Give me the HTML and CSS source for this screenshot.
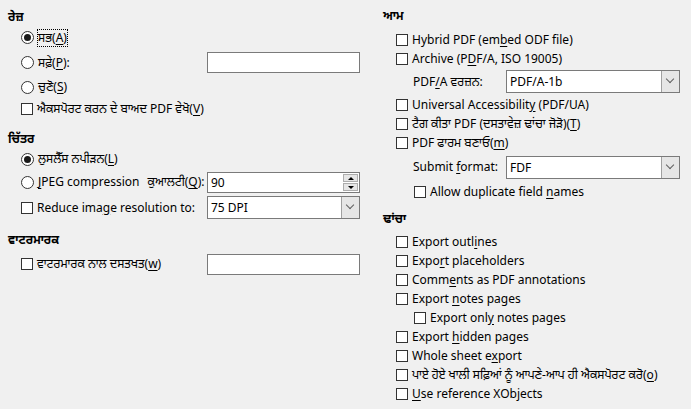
FILE: index.html
```html
<!DOCTYPE html>
<html lang="pa">
<head>
<meta charset="utf-8">
<link rel="stylesheet" href="styles.css">
</head>
<body>
<div class="dialog">
  <div class="col col-left">
    <div class="heading">ਰੇਜ਼</div>
    <div class="row r-all"><span class="radio checked"></span><span class="label focus">ਸਭ(<u>A</u>)</span></div>
    <div class="row r-pages"><span class="radio"></span><span class="label">ਸਫ਼ੇ(<u>P</u>):</span><span class="field field-left"></span></div>
    <div class="row r-sel"><span class="radio"></span><span class="label">ਚੁਣੋ(<u>S</u>)</span></div>
    <div class="row r-view"><span class="check"></span><span class="label">ਐਕਸਪੋਰਟ ਕਰਨ ਦੇ ਬਾਅਦ PDF ਵੇਖੋ(<u>V</u>)</span></div>

    <div class="heading h-images">ਚਿੱਤਰ</div>
    <div class="row r-lossless"><span class="radio checked"></span><span class="label">ਲੁਸਲੈੱਸ ਨਪੀੜਨ(<u>L</u>)</span></div>
    <div class="row r-jpeg"><span class="radio"></span><span class="label"><u>J</u>PEG compression</span><span class="label q">ਕੁਆਲਟੀ(<u>Q</u>):</span>
      <span class="field field-left spin"><span class="val">90</span><span class="spin-btns"><span class="sb up"></span><span class="sb down"></span></span></span>
    </div>
    <div class="row r-reduce"><span class="check"></span><span class="label">Reduce ima<u>g</u>e resolution to:</span>
      <span class="field field-left combo"><span class="val">75 DPI</span><span class="drop"></span></span>
    </div>

    <div class="heading h-water">ਵਾਟਰਮਾਰਕ</div>
    <div class="row r-water"><span class="check"></span><span class="label">ਵਾਟਰਮਾਰਕ ਨਾਲ ਦਸਤਖਤ(<u>w</u>)</span><span class="field field-left"></span></div>
  </div>

  <div class="col col-right">
    <div class="heading">ਆਮ</div>
    <div class="row r19 first"><span class="check"></span><span class="label">Hybrid PDF (em<u>b</u>ed ODF file)</span></div>
    <div class="row r19"><span class="check"></span><span class="label">Archive (P<u>D</u>F/A, ISO 19005)</span></div>
    <div class="row r-pdfa"><span class="label sub">PDF<u>/</u>A ਵਰਜ਼ਨ:</span>
      <span class="field field-right combo"><span class="val">PDF/A-1b</span><span class="drop"></span></span>
    </div>
    <div class="row r19"><span class="check"></span><span class="label">Universal Accessibilit<u>y</u> (PDF/UA)</span></div>
    <div class="row r19"><span class="check"></span><span class="label">ਟੈਗ ਕੀਤਾ PDF (ਦਸਤਾਵੇਜ਼ ਢਾਂਚਾ ਜੋੜੋ)(<u>T</u>)</span></div>
    <div class="row r19"><span class="check"></span><span class="label">PDF ਫਾਰਮ ਬਣਾਓ(<u>m</u>)</span></div>
    <div class="row r-submit"><span class="label sub">Submit <u>f</u>ormat:</span>
      <span class="field field-right combo"><span class="val">FDF</span><span class="drop"></span></span>
    </div>
    <div class="row r19 indent"><span class="check"></span><span class="label">Allow duplicate field <u>n</u>ames</span></div>

    <div class="heading h-struct">ਢਾਂਚਾ</div>
    <div class="row r19 first2"><span class="check"></span><span class="label">Export outl<u>i</u>nes</span></div>
    <div class="row r19"><span class="check"></span><span class="label">Expo<u>r</u>t placeholders</span></div>
    <div class="row r19"><span class="check"></span><span class="label">Comm<u>e</u>nts as PDF annotations</span></div>
    <div class="row r19"><span class="check"></span><span class="label">Export <u>n</u>otes pages</span></div>
    <div class="row r19 indent"><span class="check"></span><span class="label">Export onl<u>y</u> notes pages</span></div>
    <div class="row r19"><span class="check"></span><span class="label">Export <u>h</u>idden pages</span></div>
    <div class="row r19"><span class="check"></span><span class="label">Whole sheet e<u>x</u>port</span></div>
    <div class="row r19"><span class="check"></span><span class="label">ਪਾਏ ਹੋਏ ਖਾਲੀ ਸਫ਼ਿਆਂ ਨੂੰ ਆਪਣੇ-ਆਪ ਹੀ ਐਕਸਪੋਰਟ ਕਰੋ(<u>o</u>)</span></div>
    <div class="row r19"><span class="check"></span><span class="label"><u>U</u>se reference XObjects</span></div>
  </div>
</div>
</body>
</html>
```

FILE: styles.css
```css
html, body {
  margin: 0;
  padding: 0;
  background: #f0f0f0;
}
body {
  width: 691px;
  height: 409px;
  overflow: hidden;
  font-family: "Noto Sans", "Noto Sans Gurmukhi", "Lohit Gurmukhi", sans-serif;
  font-size: 12px;
  color: #000;
}
u { text-decoration: underline; text-underline-offset: 2px; }

.dialog {
  display: grid;
  grid-template-columns: 375px 1fr;
}
.col {
  display: flex;
  flex-direction: column;
  padding-left: 8px;
}
.col-left { padding-top: 6px; }
.col-right { padding-top: 5px; }

.heading {
  height: 22px;
  line-height: 22px;
  font-weight: bold;
}
.h-images { margin-top: 7px; }
.h-water { margin-top: 10px; }
.h-struct { margin-top: 7px; }

.row {
  display: flex;
  align-items: center;
  padding-left: 13px;
  white-space: nowrap;
}
.label { line-height: 16px; }
.radio, .check {
  flex: none;
  box-sizing: border-box;
  background: #fff;
  border: 1px solid #333;
  margin-right: 4px;
}
.radio {
  width: 13px;
  height: 13px;
  border-radius: 50%;
  display: flex;
  align-items: center;
  justify-content: center;
}
.radio.checked::after {
  content: "";
  width: 7px;
  height: 7px;
  border-radius: 50%;
  background: #1a1a1a;
}
.check {
  width: 12px;
  height: 12px;
}
.focus {
  outline: 1px dotted #000;
  outline-offset: 0;
}

/* left column rows */
.r-all { height: 19px; }
.r-pages { height: 31px; }
.r-sel { height: 18px; }
.r-view { height: 25px; }
.r-lossless { height: 18px; }
.r-jpeg { height: 28px; }
.r-reduce { height: 23px; }
.r-water { height: 22px; margin-top: 2px; }
.q { margin-left: 8px; }

.field {
  box-sizing: border-box;
  background: #fff;
  border: 1px solid #7a7a7a;
  display: flex;
  align-items: center;
}
.field-left {
  margin-left: auto;
  margin-right: 15px;
  width: 153px;
  height: 21px;
}
.r-reduce .field-left { height: 23px; }
.field-right {
  margin-left: auto;
  margin-right: 11px;
  width: 174px;
  height: 23px;
}
.val {
  flex: 1;
  padding-left: 3px;
}
.spin-btns {
  align-self: stretch;
  display: flex;
  flex-direction: column;
  gap: 1px;
  padding: 1px 1px 1px 0;
}
.sb {
  flex: 1;
  width: 15px;
  background: #e6e6e6;
  border: 1px solid #adadad;
  box-sizing: border-box;
  position: relative;
}
.sb::after {
  content: "";
  position: absolute;
  left: 4px;
  top: 2px;
  border-left: 3px solid transparent;
  border-right: 3px solid transparent;
}
.sb.up::after { border-bottom: 3px solid #000; }
.sb.down::after { border-top: 3px solid #000; }
.drop {
  align-self: stretch;
  width: 17px;
  background: #e6e6e6;
  border-left: 1px solid #a0a0a0;
  position: relative;
}
.drop::after {
  content: "";
  position: absolute;
  left: 5px;
  top: 5px;
  width: 5px;
  height: 5px;
  border-right: 1px solid #606060;
  border-bottom: 1px solid #606060;
  transform: rotate(45deg);
}

/* right column rows */
.r19 { height: 19px; }
.first { margin-top: 3px; }
.first2 { margin-top: 2px; }
.r-pdfa { height: 27px; }
.r-submit { height: 30px; }
.sub { padding-left: 17px; }
.indent { padding-left: 31px; }
```
